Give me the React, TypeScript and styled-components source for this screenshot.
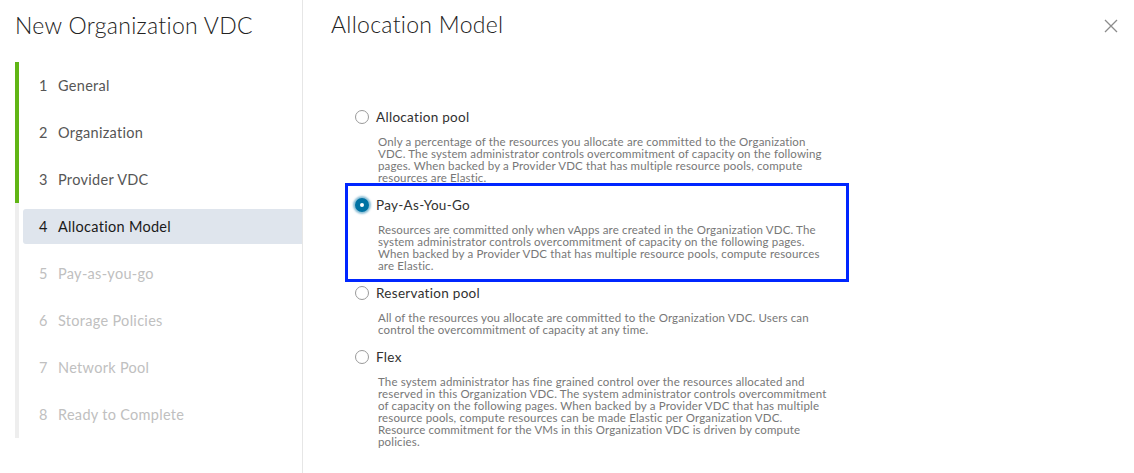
import React from "react";
import styled, { createGlobalStyle } from "styled-components";

const GlobalStyle = createGlobalStyle`
  html, body {
    margin: 0;
    padding: 0;
    background: #fff;
  }
  body {
    font-family: Lato, "Liberation Sans", sans-serif;
    color: #565656;
  }
`;

const Wizard = styled.div`
  display: flex;
  width: 1134px;
  height: 473px;
  overflow: hidden;
  background: #fff;
`;

const Sidebar = styled.div`
  width: 302px;
  flex-shrink: 0;
  border-right: 1px solid #e6e6e6;
  display: flex;
  flex-direction: column;
`;

const WizardTitle = styled.h2`
  margin: 0;
  padding: 11px 0 0 15px;
  height: 62px;
  box-sizing: border-box;
  font-size: 23px;
  font-weight: 300;
  color: #222;
  letter-spacing: 0.3px;
`;

const StepList = styled.ol`
  list-style: none;
  margin: 0 0 0 15px;
  padding: 0;
  border-left: 4px solid #eeeeee;
  position: relative;
  display: flex;
  flex-direction: column;
`;

const Progress = styled.div`
  position: absolute;
  left: -4px;
  top: 0;
  width: 4px;
  background: #60b515;
`;

const Step = styled.li<{ $state: "done" | "active" | "todo" }>`
  height: 35px;
  margin: 6px 0 6px 4px;
  padding-left: 16px;
  display: flex;
  align-items: center;
  font-size: 14.5px;
  letter-spacing: 0.3px;
  border-radius: 3px 0 0 3px;
  background: ${(p) => (p.$state === "active" ? "#dfe5ed" : "transparent")};
  color: ${(p) =>
    p.$state === "active" ? "#1a1a1a" : p.$state === "done" ? "#565656" : "#c0c0c0"};
  font-weight: 400;
`;

const StepNum = styled.span`
  width: 19px;
`;

const Main = styled.div`
  flex: 1;
  padding: 10px 0 0 28px;
  position: relative;
`;

const MainTitle = styled.h3`
  margin: 0;
  font-size: 23px;
  font-weight: 300;
  color: #222;
  letter-spacing: 0.3px;
`;

const CloseButton = styled.button`
  position: absolute;
  right: 16px;
  top: 19px;
  width: 14px;
  height: 14px;
  padding: 0;
  border: none;
  background: none;
  cursor: pointer;
  svg {
    display: block;
  }
`;

const Options = styled.div`
  margin: 70px 0 0 24px;
  display: flex;
  flex-direction: column;
  gap: 12px;
  width: 472px;
`;

const Option = styled.label<{ $focused?: boolean }>`
  display: block;
  position: relative;
  &::after {
    content: "";
    display: ${(p) => (p.$focused ? "block" : "none")};
    position: absolute;
    left: -10px;
    right: -22px;
    top: -13px;
    bottom: -10px;
    border: 3px solid #0026ff;
    pointer-events: none;
  }
`;

const OptionHead = styled.div`
  display: flex;
  align-items: center;
  height: 18px;
  gap: 7px;
  font-size: 13.5px;
  letter-spacing: 0.3px;
  color: #313131;
`;

const Radio = styled.span<{ $checked?: boolean }>`
  width: 14px;
  height: 14px;
  border-radius: 50%;
  box-sizing: border-box;
  flex-shrink: 0;
  display: flex;
  align-items: center;
  justify-content: center;
  border: ${(p) => (p.$checked ? "none" : "1px solid #9a9a9a")};
  background: ${(p) => (p.$checked ? "#0072a3" : "#fff")};
  box-shadow: ${(p) => (p.$checked ? "0 0 2px 2px rgba(0, 114, 163, 0.45)" : "none")};
  &::before {
    content: "";
    display: ${(p) => (p.$checked ? "block" : "none")};
    width: 4px;
    height: 4px;
    border-radius: 50%;
    background: #fff;
  }
`;

const Desc = styled.p`
  margin: 10px 0 0 23px;
  font-size: 11.5px;
  letter-spacing: 0.15px;
  line-height: 12px;
  color: #777;
`;

const steps = [
  "General",
  "Organization",
  "Provider VDC",
  "Allocation Model",
  "Pay-as-you-go",
  "Storage Policies",
  "Network Pool",
  "Ready to Complete",
];
const activeStep = 3;

const models = [
  {
    name: "Allocation pool",
    desc: "Only a percentage of the resources you allocate are committed to the Organization VDC. The system administrator controls overcommitment of capacity on the following pages. When backed by a Provider VDC that has multiple resource pools, compute resources are Elastic.",
  },
  {
    name: "Pay-As-You-Go",
    desc: "Resources are committed only when vApps are created in the Organization VDC. The system administrator controls overcommitment of capacity on the following pages. When backed by a Provider VDC that has multiple resource pools, compute resources are Elastic.",
  },
  {
    name: "Reservation pool",
    desc: "All of the resources you allocate are committed to the Organization VDC. Users can control the overcommitment of capacity at any time.",
  },
  {
    name: "Flex",
    desc: "The system administrator has fine grained control over the resources allocated and reserved in this Organization VDC. The system administrator controls overcommitment of capacity on the following pages. When backed by a Provider VDC that has multiple resource pools, compute resources can be made Elastic per Organization VDC. Resource commitment for the VMs in this Organization VDC is driven by compute policies.",
  },
];
const selected = 1;

const App = () => {
  return (
    <Wizard>
      <GlobalStyle />
      <Sidebar>
        <WizardTitle>New Organization VDC</WizardTitle>
        <StepList>
          <Progress style={{ height: activeStep * 47 }} />
          {steps.map((s, i) => (
            <Step
              key={s}
              $state={i < activeStep ? "done" : i === activeStep ? "active" : "todo"}
            >
              <StepNum>{i + 1}</StepNum>
              {s}
            </Step>
          ))}
        </StepList>
      </Sidebar>
      <Main>
        <MainTitle>Allocation Model</MainTitle>
        <CloseButton aria-label="Close">
          <svg width="14" height="14" viewBox="0 0 14 14">
            <path d="M1 1 L13 13 M13 1 L1 13" stroke="#8c8c8c" strokeWidth="1.3" />
          </svg>
        </CloseButton>
        <Options>
          {models.map((m, i) => (
            <Option key={m.name} $focused={i === selected}>
              <OptionHead>
                <Radio $checked={i === selected} />
                {m.name}
              </OptionHead>
              <Desc>{m.desc}</Desc>
            </Option>
          ))}
        </Options>
      </Main>
    </Wizard>
  );
};

export default App;
